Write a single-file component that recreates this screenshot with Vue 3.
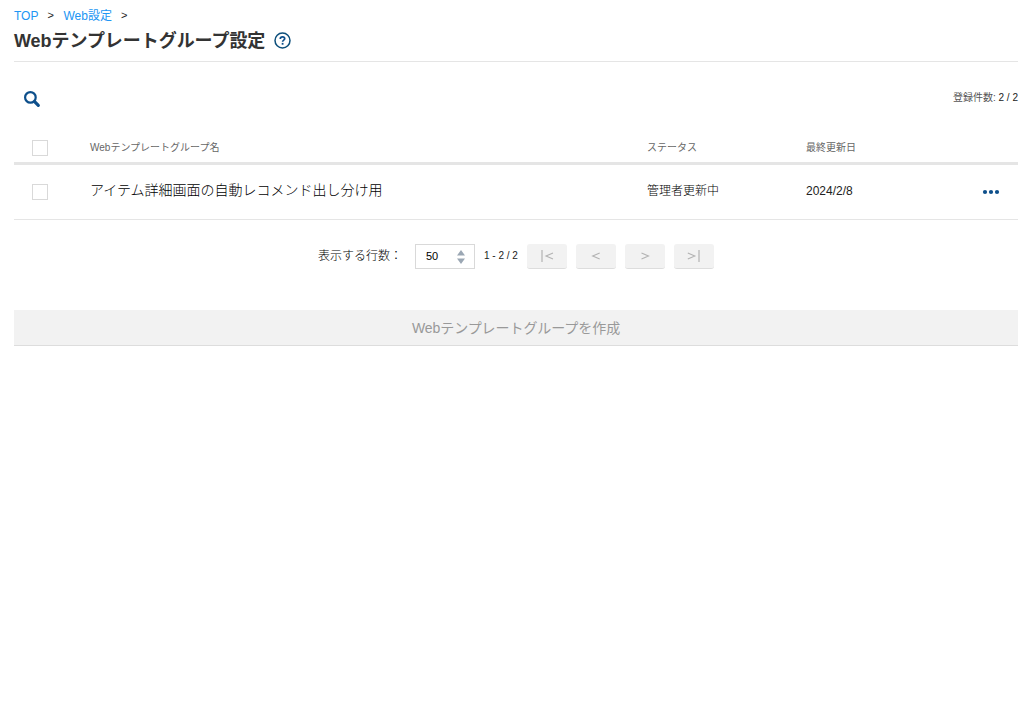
<template>
  <div class="page">
    <nav class="breadcrumb">
      <a href="#">TOP</a>
      <span class="sep">&gt;</span>
      <a href="#">Web設定</a>
      <span class="sep">&gt;</span>
    </nav>

    <header class="title-bar">
      <h1>Webテンプレートグループ設定</h1>
      <svg class="help" width="17" height="17" viewBox="0 0 17 17">
        <circle cx="8.5" cy="8.5" r="7.5" fill="none" stroke="#0d4f7b" stroke-width="1.5" />
        <path d="M6.3 6.9C6.3 5.5 7.2 4.9 8.5 4.9S10.7 5.6 10.7 6.7C10.7 8.1 8.6 8.2 8.6 9.8" fill="none" stroke="#0d4f8b" stroke-width="1.7" />
        <rect x="7.7" y="10.9" width="1.8" height="1.8" fill="#0d4f8b" />
      </svg>
    </header>

    <div class="toolbar">
      <svg class="search" width="17" height="17" viewBox="0 0 17 17">
        <circle cx="6.4" cy="6.4" r="5.3" fill="none" stroke="#0d4f8b" stroke-width="2.2" />
        <path d="M10.6 10.6L14.3 14.3" stroke="#0d4f8b" stroke-width="3.2" stroke-linecap="round" />
      </svg>
      <div class="count"><span>登録件数:</span> {{ total }} / {{ total }}</div>
    </div>

    <div class="row head">
      <div class="check"><span class="box"></span></div>
      <div class="name">Webテンプレートグループ名</div>
      <div class="status">ステータス</div>
      <div class="date">最終更新日</div>
    </div>
    <div v-for="row in rows" :key="row.name" class="row item">
      <div class="check"><span class="box"></span></div>
      <div class="name">{{ row.name }}</div>
      <div class="status">{{ row.status }}</div>
      <div class="date">{{ row.date }}</div>
      <svg class="more" width="17" height="4" viewBox="0 0 17 4">
        <circle cx="2" cy="2" r="2.1" />
        <circle cx="8" cy="2" r="2.1" />
        <circle cx="14" cy="2" r="2.1" />
      </svg>
    </div>

    <div class="pager">
      <span class="label">表示する行数：</span>
      <div class="select">
        <span>{{ pageSize }}</span>
        <svg width="8" height="14" viewBox="0 0 8 14">
          <path d="M0 5.5L4 0L8 5.5ZM0 8.5H8L4 14Z" fill="#9ba7b4" />
        </svg>
      </div>
      <span class="range">1 - {{ total }} / {{ total }}</span>
      <button v-for="icon in pagerIcons" :key="icon.arrow" class="page-btn" disabled>
        <svg width="16" height="12" viewBox="0 0 16 12">
          <path :d="icon.arrow" />
          <path v-if="icon.bar" :d="icon.bar" class="bar" />
        </svg>
      </button>
    </div>

    <button class="create" disabled>Webテンプレートグループを作成</button>
  </div>
</template>

<script setup>
import { ref } from 'vue';

const pageSize = ref(50);
const total = ref(2);

const rows = ref([
  { name: 'アイテム詳細画面の自動レコメンド出し分け用', status: '管理者更新中', date: '2024/2/8' },
]);

// first, previous, next, last
const pagerIcons = [
  { arrow: 'M14 3L7 6L14 9', bar: 'M3 0V12' },
  { arrow: 'M11.7 3L4.7 6L11.7 9' },
  { arrow: 'M4.5 3L11.5 6L4.5 9' },
  { arrow: 'M1.8 3L8.8 6L1.8 9', bar: 'M13 0V12' },
];
</script>

<style>
body {
  background: #fff;
}
</style>

<style scoped>
.page {
  padding: 8px 17px 0 14px;
  font-family: "Liberation Sans", "Noto Sans CJK JP", sans-serif;
  font-size: 12px;
  color: #222;
}

.breadcrumb {
  display: flex;
  height: 16px;
  line-height: 16px;
}

.breadcrumb a {
  color: #2196f3;
  text-decoration: none;
}

.sep {
  width: 25px;
  padding-left: 9px;
  box-sizing: border-box;
  font-size: 11px;
  line-height: 15px;
}

.title-bar {
  display: flex;
  align-items: center;
  height: 38px;
  padding-bottom: 4px;
  box-sizing: border-box;
  border-bottom: 1px solid #e5e5e5;
}

h1 {
  margin: 0;
  font-size: 18px;
  line-height: 24px;
  letter-spacing: -0.05px;
  color: #333;
}

.help {
  margin-left: 9px;
}

.toolbar {
  display: flex;
  justify-content: space-between;
  align-items: center;
  height: 72px;
  padding-left: 10px;
}

.search {
  margin-top: 2px;
}

.count {
  padding-bottom: 3px;
  font-size: 10px;
}

.count span {
  color: #555;
}

.row {
  display: flex;
  align-items: center;
  box-sizing: border-box;
}

.head {
  height: 31px;
  border-bottom: 3px solid #e5e5e5;
  font-size: 10px;
  color: #666;
}

.item {
  height: 55px;
  border-bottom: 1px solid #e5e5e5;
}

.check {
  width: 76px;
  padding-left: 18px;
  box-sizing: border-box;
}

.box {
  display: block;
  width: 14px;
  height: 14px;
  border: 1px solid #d9d9d9;
}

.name {
  width: 557px;
  padding-bottom: 3px;
}

.item .name {
  padding-bottom: 6px;
  font-size: 14px;
}

.item .name,
.item .status,
.label {
  font-weight: 300;
  color: #000;
}

.status {
  width: 159px;
  padding-bottom: 6px;
}

.date {
  width: 177px;
  padding-bottom: 3px;
}

.head .status,
.head .date {
  padding-bottom: 3px;
}

.more {
  fill: #0d4f8b;
  overflow: visible;
}

.pager {
  display: flex;
  align-items: center;
  height: 25px;
  margin: 24px 0 41px;
  padding-left: 304px;
}

.label {
  width: 97px;
  padding-bottom: 5px;
}

.select {
  display: flex;
  align-items: center;
  justify-content: space-between;
  width: 60px;
  height: 25px;
  padding: 0 9px 0 10px;
  box-sizing: border-box;
  border: 1px solid #d9d9d9;
  font-size: 11px;
  color: #000;
}

.select span {
  padding-bottom: 2px;
}

.range {
  width: 43px;
  padding: 0 0 2px 9px;
  font-size: 10px;
}

.page-btn {
  display: flex;
  align-items: center;
  justify-content: center;
  width: 40px;
  height: 25px;
  margin-right: 9px;
  padding: 0 0 1px;
  border: 0;
  border-bottom: 1px solid #ddd;
  border-radius: 3px;
  background: #f2f2f2;
}

.page-btn path {
  fill: none;
  stroke: #b3b3b3;
  stroke-width: 1.1;
}

.page-btn .bar {
  stroke: #ccc;
  stroke-width: 2;
}

.create {
  display: block;
  width: 100%;
  height: 36px;
  padding: 0 0 2px;
  border: 0;
  border-bottom: 1px solid #ddd;
  background: #f2f2f2;
  font-family: inherit;
  font-size: 14px;
  letter-spacing: -0.07px;
  color: #999;
}
</style>
